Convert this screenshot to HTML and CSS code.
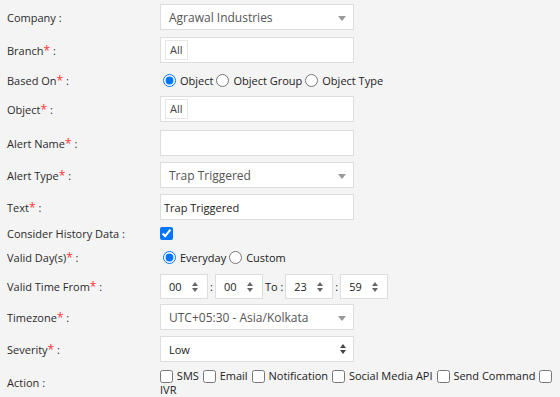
FILE: index.html
```html
<!DOCTYPE html>
<html lang="en">

<head>
    <meta charset="UTF-8">
    <meta name="viewport" content="width=device-width, initial-scale=1.0">
    <title>Alert Configuration</title>
    <link rel="stylesheet" href="styles.css">
</head>

<body>
    <!-- Alert Form -->
    <div class="alert-form">
        <div class="form-row company-row">
            <label class="form-label">Company :</label>
            <div class="field">
                <div class="fake-select">
                    <span>Agrawal Industries</span>
                    <span class="caret"></span>
                </div>
            </div>
        </div>

        <div class="form-row">
            <label class="form-label">Branch<span class="req">*</span> :</label>
            <div class="field">
                <div class="tag-box"><span class="tag">All</span></div>
            </div>
        </div>

        <div class="form-row radio-row">
            <label class="form-label">Based On<span class="req">*</span> :</label>
            <div class="field choices">
                <label class="choice"><input type="radio" name="basedOn" checked>Object</label>
                <label class="choice"><input type="radio" name="basedOn">Object Group</label>
                <label class="choice"><input type="radio" name="basedOn">Object Type</label>
            </div>
        </div>

        <div class="form-row object-row">
            <label class="form-label">Object<span class="req">*</span> :</label>
            <div class="field">
                <div class="tag-box"><span class="tag">All</span></div>
            </div>
        </div>

        <div class="form-row">
            <label class="form-label">Alert Name<span class="req">*</span> :</label>
            <div class="field">
                <input type="text" class="text-input">
            </div>
        </div>

        <div class="form-row">
            <label class="form-label">Alert Type<span class="req">*</span> :</label>
            <div class="field">
                <div class="fake-select">
                    <span>Trap Triggered</span>
                    <span class="caret"></span>
                </div>
            </div>
        </div>

        <div class="form-row">
            <label class="form-label">Text<span class="req">*</span> :</label>
            <div class="field">
                <input type="text" class="text-input" value="Trap Triggered">
            </div>
        </div>

        <div class="form-row check-row">
            <label class="form-label">Consider History Data :</label>
            <div class="field">
                <input type="checkbox" class="history-check" checked>
            </div>
        </div>

        <div class="form-row days-row">
            <label class="form-label">Valid Day(s)<span class="req">*</span> :</label>
            <div class="field choices">
                <label class="choice"><input type="radio" name="days" checked>Everyday</label>
                <label class="choice"><input type="radio" name="days">Custom</label>
            </div>
        </div>

        <div class="form-row time-row">
            <label class="form-label">Valid Time From<span class="req">*</span> :</label>
            <div class="field time-field">
                <div class="spinner"><span>00</span><span class="updown"><i class="up"></i><i class="down"></i></span></div>
                <span class="sep">:</span>
                <div class="spinner"><span>00</span><span class="updown"><i class="up"></i><i class="down"></i></span></div>
                <span class="sep">To :</span>
                <div class="spinner"><span>23</span><span class="updown"><i class="up"></i><i class="down"></i></span></div>
                <span class="sep">:</span>
                <div class="spinner"><span>59</span><span class="updown"><i class="up"></i><i class="down"></i></span></div>
            </div>
        </div>

        <div class="form-row">
            <label class="form-label">Timezone<span class="req">*</span> :</label>
            <div class="field">
                <div class="fake-select">
                    <span>UTC+05:30 - Asia/Kolkata</span>
                    <span class="caret"></span>
                </div>
            </div>
        </div>

        <div class="form-row">
            <label class="form-label">Severity<span class="req">*</span> :</label>
            <div class="field">
                <div class="fake-select native">
                    <span>Low</span>
                    <span class="updown dark"><i class="up"></i><i class="down"></i></span>
                </div>
            </div>
        </div>

        <div class="form-row action-row">
            <label class="form-label">Action :</label>
            <div class="field actions"><label class="action"><input type="checkbox"> SMS</label><label class="action"><input type="checkbox"> Email</label><label class="action"><input type="checkbox"> Notification</label><label class="action"><input type="checkbox"> Social Media API</label><label class="action"><input type="checkbox"> Send Command</label><label class="action"><input type="checkbox"> IVR</label></div>
        </div>
    </div>
</body>

</html>
```

FILE: styles.css
```css
/* Basic reset */
* {
    margin: 0;
    padding: 0;
    box-sizing: border-box;
}

body {
    font-family: 'Open Sans', sans-serif;
    font-size: 11px;
    background-color: #f4f4f4;
    color: #2b2b2b;
    overflow: hidden;
}

/* Form layout */
.alert-form {
    padding: 4px 0 0 7px;
}

.form-row {
    display: flex;
    align-items: center;
    min-height: 26px;
    margin-bottom: 6px;
}

.form-label {
    width: 153px;
    flex-shrink: 0;
}

.req {
    color: #f33;
    font-size: 12px;
}

.field {
    flex: 1;
}

.company-row {
    margin-bottom: 7px;
}

.radio-row {
    min-height: 22px;
    margin-bottom: 5px;
}

.object-row {
    margin-bottom: 8px;
}

.check-row {
    min-height: 14px;
    margin-bottom: 5px;
}

.days-row {
    min-height: 22px;
    margin-bottom: 6px;
}

.time-row {
    min-height: 25px;
    margin-bottom: 5px;
}

/* Inputs */
.text-input,
.tag-box,
.fake-select {
    width: 194px;
    height: 26px;
    background-color: #fff;
    border: 1px solid #ddd;
    font-family: inherit;
    font-size: 11px;
    color: #222;
}

.text-input {
    padding: 0 3px;
    outline: none;
}

.tag-box {
    display: flex;
    align-items: center;
    padding-left: 4px;
}

.tag {
    border: 1px solid #e6e6e6;
    padding: 2px 4px;
    line-height: 14px;
    color: #444;
}

.fake-select {
    display: flex;
    align-items: center;
    justify-content: space-between;
    padding: 0 7px 0 8px;
    font-size: 12px;
    color: #555;
}

.fake-select.native {
    font-size: 11px;
    color: #222;
}

.caret {
    width: 0;
    height: 0;
    border-left: 4px solid transparent;
    border-right: 4px solid transparent;
    border-top: 5px solid #999;
    margin-top: 2px;
}

/* Up/down arrows */
.updown {
    display: flex;
    flex-direction: column;
    gap: 2px;
}

.updown i {
    width: 0;
    height: 0;
    border-left: 3px solid transparent;
    border-right: 3px solid transparent;
}

.updown .up {
    border-bottom: 4px solid #666;
}

.updown .down {
    border-top: 4px solid #666;
}

.updown.dark .up {
    border-bottom-color: #444;
}

.updown.dark .down {
    border-top-color: #444;
}

/* Radios and checkboxes */
.choices {
    display: flex;
    align-items: center;
}

.choice {
    display: flex;
    align-items: center;
    color: #222;
}

.choice input {
    width: 13px;
    height: 13px;
    margin: 0 4px 0 3px;
}

.history-check {
    display: block;
    width: 13px;
    height: 13px;
}

/* Time spinners */
.time-field {
    display: flex;
    align-items: center;
}

.spinner {
    width: 48px;
    height: 25px;
    background-color: #fff;
    border: 1px solid #ddd;
    display: flex;
    align-items: center;
    justify-content: space-between;
    padding: 0 9px 0 8px;
    color: #222;
}

.sep {
    margin: 0 2px;
    color: #222;
}

/* Action list */
.actions {
    line-height: 13px;
    padding-top: 1px;
}

.action {
    margin-right: 4px;
    color: #222;
}

.action input {
    width: 13px;
    height: 13px;
    margin: 0 1px 0 0;
    vertical-align: -3px;
}
```
